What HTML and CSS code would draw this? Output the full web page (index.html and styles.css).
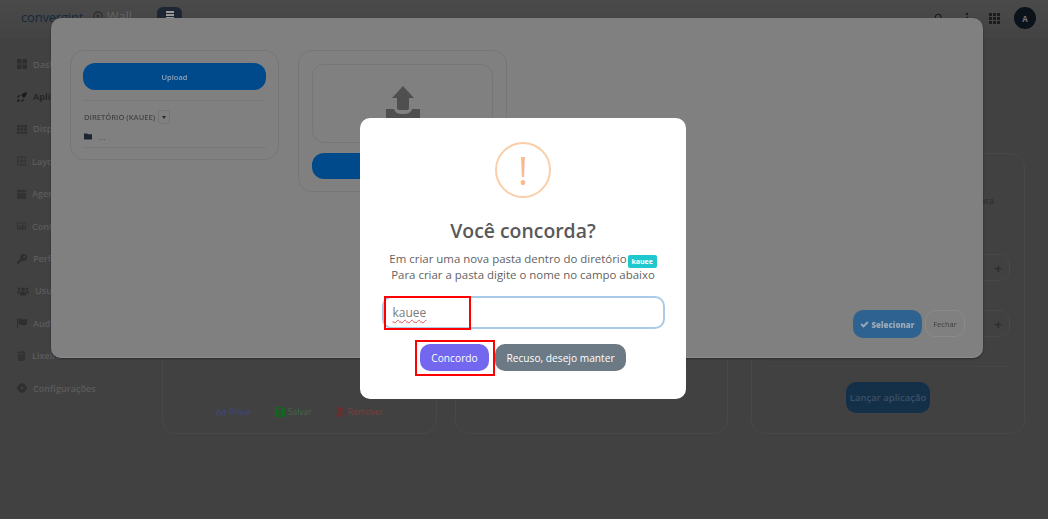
FILE: index.html
```html
<!DOCTYPE html>
<html lang="en">

<head>
  <meta charset="UTF-8" />
  <meta name="viewport" content="width=device-width, initial-scale=1" />
  <title>Convergint Wall</title>
  <link rel="stylesheet" href="styles.css">
</head>

<body>

  <div class="app">
    <header class="topbar">
      <div class="brand">conver<span class="brand-dot">g</span>int</div>
      <div class="wall">
        <svg class="wall-icon" viewBox="0 0 12 12"><circle cx="6" cy="6" r="5" fill="none" stroke="#2c2c2c" stroke-width="1.4"/><path d="M4.6 3.6 8.4 6 4.6 8.4z" fill="#2c2c2c"/></svg>
        <span>Wall</span>
      </div>
      <button class="menu-btn"><span></span><span></span><span></span></button>
      <div class="top-icons">
        <svg class="top-search" viewBox="0 0 12 12"><circle cx="5.5" cy="5.5" r="3.8" fill="none" stroke="#1c1c1c" stroke-width="1.5"/><path d="m8.4 8.4 3 3" stroke="#1c1c1c" stroke-width="1.5"/></svg>
        <svg class="top-dots" viewBox="0 0 4 12"><circle cx="2" cy="2" r="1.2"/><circle cx="2" cy="6" r="1.2"/><circle cx="2" cy="10" r="1.2"/></svg>
        <svg class="top-grid" viewBox="0 0 11 11"><rect width="3" height="3"/><rect x="4" width="3" height="3"/><rect x="8" width="3" height="3"/><rect y="4" width="3" height="3"/><rect x="4" y="4" width="3" height="3"/><rect x="8" y="4" width="3" height="3"/><rect y="8" width="3" height="3"/><rect x="4" y="8" width="3" height="3"/><rect x="8" y="8" width="3" height="3"/></svg>
        <div class="avatar">A</div>
      </div>
    </header>

    <div class="main">
      <nav class="sidebar">
        <a class="nav-item"><svg class="nav-icon" viewBox="0 0 10 10"><path d="M0 0h4.500v4.500H0zM5.500 0H10v4.500H5.500zM0 5.500h4.500V10H0zM5.500 5.500H10V10H5.500z"/></svg>Dashboard</a>
        <a class="nav-item active"><svg class="nav-icon" viewBox="0 0 10 10"><path d="M4 3.200C5.400 1.200 7.400.4 10 0c-.3 2.600-1.200 4.600-3.200 6L4 3.200zM0 4.800l2-1.700 1 .3-1.600 2.300L0 4.800zM5.200 10l1.700-2-.3-1-2.300 1.600L5.200 10zM1.200 7c-.8.5-1 1.800-1.100 2.900C1.200 9.800 2.500 9.600 3 8.800L1.200 7z"/></svg>Aplicações</a>
        <a class="nav-item"><svg class="nav-icon" viewBox="0 0 10 10"><path d="M0 1h2.800v2.400H0zM3.600 1h2.800v2.400H3.600zM7.200 1H10v2.400H7.200zM0 4.200h2.800v2.400H0zM3.600 4.200h2.800v2.400H3.600zM7.200 4.200H10v2.400H7.200zM0 7.400h2.800v2.400H0zM3.600 7.400h2.800v2.400H3.600zM7.200 7.400H10v2.400H7.200z"/></svg>Dispositivos</a>
        <a class="nav-item"><svg class="nav-icon small" viewBox="0 0 9 9"><path fill-rule="evenodd" d="M0 0h9v9H0zm1 1v3h3V1zm4 0v3h3V1zM1 5v3h3V5zm4 0v3h3V5z"/></svg>Layouts</a>
        <a class="nav-item"><svg class="nav-icon small" viewBox="0 0 9 10"><path d="M2 0h1v1h3V0h1v1h2v2H0V1h2zM0 3.800h9V10H0z"/></svg>Agendamentos</a>
        <a class="nav-item"><svg class="nav-icon small" viewBox="0 0 9 9"><path fill-rule="evenodd" d="M0 1h9v7H0zm1 1v4h7V2zm.5 3.500L3 4l1.200 1 1.800-2 1.500 2.500z"/></svg>Conteúdos</a>
        <a class="nav-item"><svg class="nav-icon" viewBox="0 0 10 10"><path fill-rule="evenodd" d="M6.500 0a3.500 3.500 0 1 1-1.300 6.700L4.300 7.600H3v1.300H1.700V10H0V8l3.300-3.300A3.500 3.500 0 0 1 6.500 0zm.8 1.500a1.200 1.200 0 1 0 0 2.400 1.200 1.200 0 0 0 0-2.400z"/></svg>Perfis</a>
        <a class="nav-item"><svg class="nav-icon wide" viewBox="0 0 12 9"><circle cx="6" cy="3" r="1.900"/><circle cx="2" cy="2.400" r="1.300"/><circle cx="10" cy="2.400" r="1.300"/><path d="M2.700 9V7.200C2.700 6 4 5.300 6 5.300S9.300 6 9.300 7.200V9zM0 6.300C0 5 .8 4.400 2 4.400c.5 0 .9.100 1.200.4C2.400 5.300 2 6 2 6.800H0zM12 6.300C12 5 11.200 4.400 10 4.400c-.5 0-.9.100-1.200.4.800.5 1.200 1.200 1.200 2h2z"/></svg>Usuários</a>
        <a class="nav-item"><svg class="nav-icon" viewBox="0 0 10 10"><path d="M0 0h1v10H0zM1.500 1C3.500 0 5 2 7 1.500c1-.2 2-.5 3-.8v5.500c-2 1.300-4 1.300-5.500.6-1-.4-2-.3-3 .2z"/></svg>Auditoria</a>
        <a class="nav-item"><svg class="nav-icon small" viewBox="0 0 9 10"><path d="M3 0h3l.5 1H9v1H0V1h2.500zM.7 2.800h7.600L7.700 10H1.300z"/></svg>Lixeira</a>
        <a class="nav-item"><svg class="nav-icon" viewBox="0 0 10 10"><path fill-rule="evenodd" d="M4 0h2l.3 1.400 1-.5 1.400 1.400-.6 1.100L10 4v2l-1.900.6.600 1.100-1.400 1.400-1-.5L6 10H4l-.3-1.400-1 .5-1.400-1.400.6-1.100L0 6V4l1.900-.6-.6-1.100L2.700.9l1 .5zM5 3.400a1.600 1.600 0 1 0 0 3.200 1.600 1.600 0 0 0 0-3.200z"/></svg>Configurações</a>
      </nav>

      <section class="cards">
        <div class="card card-actions">
          <a class="action action-blue"><svg viewBox="0 0 12 9"><path fill="none" stroke="currentColor" stroke-width="1.200" d="M.7 6.200a2.200 2.200 0 1 0 4.400 0 2.200 2.200 0 0 0-4.400 0zm6.200 0a2.200 2.200 0 1 0 4.400 0 2.200 2.200 0 0 0-4.400 0zM5 6c.6-.4 1.400-.4 2 0M1 5.500 2.500.8h1.300M11 5.500 9.500.8H8.200"/></svg>Privar</a>
          <a class="action action-green"><svg viewBox="0 0 9 9"><path fill-rule="evenodd" d="M0 0h7l2 2v7H0zm1.800 1v2.400h4.400V1zm2.700 3.800a1.500 1.500 0 1 0 0 3 1.500 1.500 0 0 0 0-3z"/></svg>Salvar</a>
          <a class="action action-red"><svg viewBox="0 0 10 10"><path fill-rule="evenodd" d="M5 0c1.600 0 2.800 1 2.800 2.500 0 1-.5 1.700-1.200 2.100v1H3.400v-1C2.700 4.200 2.200 3.500 2.200 2.500 2.200 1 3.400 0 5 0zM3.900 2a.7.7 0 1 0 0 1.400.7.700 0 0 0 0-1.400zm2.200 0a.7.7 0 1 0 0 1.400.7.700 0 0 0 0-1.400zM.6 5.800l4.400 1.700 4.400-1.700.4.900L6.300 8l3.500 1.200-.4.800L5 8.400.6 10l-.4-.8L3.700 8 .2 6.700z"/></svg>Remover</a>
        </div>
        <div class="card card-middle"></div>
        <div class="card card-launch">
          <p class="launch-text">Escolha o conteúdo para</p>
          <div class="field"><span>+</span></div>
          <div class="field"><span>+</span></div>
          <div class="launch-box">
            <button class="launch-btn">Lançar aplicação</button>
          </div>
        </div>
      </section>
    </div>
  </div>

  <!-- Upload modal -->
  <div class="modal">
    <div class="modal-body">
      <div class="panel panel-dir">
        <button class="upload-btn">Upload</button>
        <div class="dir-head">
          <span>DIRETÓRIO (KAUEE)</span>
          <button class="caret-btn"><i></i></button>
        </div>
        <div class="dir-row">
          <svg viewBox="0 0 9 7"><path d="M0 0h3.500l1 1H9v6H0z"/></svg>
          <span>...</span>
        </div>
      </div>
      <div class="panel panel-upload">
        <div class="dropzone">
          <svg class="drop-icon" viewBox="0 0 34 40"><path d="M17 0 28 12H23V22Q23 24 21 24H13Q11 24 11 22V12H6zM0 23H8C9 27 12 28 17 28S25 27 26 23H34V40H0z"/></svg>
        </div>
        <button class="send-btn">Enviar</button>
      </div>
    </div>
    <div class="modal-footer">
      <button class="select-btn">
        <svg viewBox="0 0 10 8"><path d="M.5 4.200 2 2.700l1.800 1.800L8 .4l1.500 1.500L3.800 7.600z"/></svg>
        Selecionar
      </button>
      <button class="close-btn">Fechar</button>
    </div>
  </div>

  <!-- Confirm dialog -->
  <div class="dialog">
    <div class="warn-icon">!</div>
    <h2 class="dialog-title">Você concorda?</h2>
    <div class="dialog-text">
      <span class="text-line">Em criar uma nova pasta dentro do diretório<span class="badge">kauee</span></span>
      <span class="text-line">Para criar a pasta digite o nome no campo abaixo</span>
    </div>
    <div class="dialog-input"><span class="typo">kauee</span></div>
    <div class="dialog-actions">
      <button class="btn-ok">Concordo</button>
      <button class="btn-no">Recuso, desejo manter</button>
    </div>
  </div>

  <!-- Red marks drawn on the screenshot -->
  <div class="mark mark-input"></div>
  <div class="mark mark-ok"></div>

</body>

</html>
```

FILE: styles.css
```css
* {
  box-sizing: border-box;
}

html,
body {
  margin: 0;
  height: 100%;
  overflow: hidden;
}

body {
  background-color: #414141;
  color: #5e5e5e;
  font-family: 'Open Sans', 'Liberation Sans', sans-serif;
}

button {
  font-family: inherit;
  border: none;
  padding: 0;
}

.app {
  height: 519px;
  display: flex;
  flex-direction: column;
}

/* top bar */
.topbar {
  height: 37px;
  flex: none;
  display: flex;
  align-items: flex-start;
  padding: 7px 12px 0 21px;
  background: linear-gradient(#4a4a4a, #434343);
  border-bottom: 1px solid #454545;
}

.brand {
  font-size: 13px;
  line-height: 20px;
  color: #16293a;
  width: 72px;
  letter-spacing: -0.2px;
}

.brand-dot {
  color: #16293a;
}

.wall {
  display: flex;
  align-items: center;
  gap: 4px;
  width: 64px;
  height: 18px;
  font-size: 12.5px;
  color: #666;
}

.wall-icon {
  width: 10px;
  height: 10px;
}

.menu-btn {
  width: 25px;
  height: 20px;
  border-radius: 6px;
  background: #1e2633;
  display: flex;
  flex-direction: column;
  align-items: center;
  gap: 1px;
  padding-top: 4px;
}

.menu-btn span {
  width: 8px;
  height: 2px;
  background: #9a9a9a;
}

.top-icons {
  margin-left: auto;
  display: flex;
  align-items: center;
  height: 22px;
}

.top-icons svg {
  fill: #1c1c1c;
}

.top-search {
  width: 9px;
  height: 9px;
  margin-right: 22px;
  margin-top: -2px;
}

.top-dots {
  width: 4px;
  height: 12px;
  margin-right: 20px;
}

.top-grid {
  width: 11px;
  height: 11px;
  margin-right: 14px;
}

.avatar {
  width: 22px;
  height: 22px;
  border-radius: 50%;
  background: #0b1219;
  color: #6f757a;
  font-size: 8px;
  font-weight: 700;
  display: flex;
  align-items: center;
  justify-content: center;
}

/* sidebar and cards behind the modal */
.main {
  flex: 1;
  display: flex;
}

.sidebar {
  width: 162px;
  flex: none;
  padding: 11px 0 0 17px;
}

.nav-item {
  height: 32.4px;
  display: flex;
  align-items: center;
  gap: 6px;
  font-size: 9.1px;
  font-weight: 600;
  color: #5c5c5c;
  white-space: nowrap;
}

.nav-item.active {
  color: #262626;
  font-weight: 700;
}

.nav-icon {
  width: 10px;
  height: 10px;
  fill: #2e2e2e;
  flex: none;
}

.nav-item.active .nav-icon {
  fill: #1c1c1c;
}

.nav-icon.small {
  width: 9px;
  fill: #333;
}

.nav-icon.wide {
  width: 12px;
}

.cards {
  flex: 1;
  display: grid;
  grid-template-columns: 275px 278px 274px;
  column-gap: 18px;
  padding: 116px 23px 85px 0;
}

.card {
  border: 1px solid #484848;
  border-radius: 14px;
}

.card-middle {
  margin-right: 5px;
}

.card-actions {
  display: flex;
  justify-content: center;
  align-items: flex-end;
  gap: 23px;
  padding-bottom: 16px;
}

.action {
  display: flex;
  align-items: center;
  gap: 3px;
  font-size: 8.5px;
}

.action svg {
  width: 10px;
  height: 10px;
  fill: currentColor;
}

.action-blue {
  color: #41467f;
}

.action-green {
  color: #416846;
}

.action-green svg {
  fill: #12661f;
}

.action-red {
  color: #7d3c3c;
}

.action-red svg {
  fill: #7a2828;
}

.card-launch {
  padding: 0 14px;
  display: flex;
  flex-direction: column;
}

.launch-text {
  margin: 41px 0 47px;
  font-size: 9px;
  line-height: 12px;
  color: #2a2a2a;
  text-align: right;
  padding-right: 16px;
}

.field {
  height: 27px;
  border: 1px solid #484848;
  border-radius: 10px;
  margin-bottom: 29px;
  display: flex;
  align-items: center;
  justify-content: flex-end;
  padding-right: 7px;
  font-size: 13px;
  font-weight: 700;
  color: #2c2c2c;
}

.launch-box {
  border-top: 1px solid #464646;
  margin: 0 2px;
  padding-top: 15px;
  display: flex;
  justify-content: center;
}

.launch-btn {
  width: 84px;
  height: 31px;
  border-radius: 10px;
  background: #143049;
  color: #3c5066;
  font-size: 9.5px;
  font-weight: 600;
}

/* upload modal */
.modal {
  position: fixed;
  left: 51px;
  top: 18px;
  width: 932px;
  height: 340px;
  background: #808080;
  border-radius: 10px;
  box-shadow: 0 1px 2px #2a2a2a;
  border-bottom: 1px solid #8c8c8c;
  padding: 32px 18px 19px 19px;
  display: flex;
  flex-direction: column;
  justify-content: space-between;
}

.modal-body {
  display: flex;
  align-items: flex-start;
  gap: 19px;
}

.panel {
  width: 209px;
  border: 1px solid #767676;
  border-radius: 14px;
  padding: 12px;
}

.panel-dir {
  height: 110px;
}

.upload-btn {
  display: block;
  width: 100%;
  height: 27px;
  border-radius: 12px;
  background: #004a8c;
  color: #8fa3b8;
  font-size: 7.5px;
  font-weight: 600;
}

.dir-head {
  margin: 10px 0 0 1px;
  padding-top: 9px;
  border-top: 1px dotted #747474;
  display: flex;
  align-items: center;
  gap: 3px;
  font-size: 7.6px;
  font-weight: 600;
  color: #444;
}

.caret-btn {
  width: 12px;
  height: 14px;
  border: 1px solid #767676;
  border-radius: 3px;
  background: none;
  display: flex;
  align-items: center;
  justify-content: center;
}

.caret-btn i {
  border: 2.5px solid transparent;
  border-top: 3px solid #2a2a2a;
  border-bottom: 0;
}

.dir-row {
  margin: 7px 0 0 1px;
  padding-bottom: 5px;
  border-bottom: 1px solid #767676;
  display: flex;
  align-items: center;
  gap: 7px;
  font-size: 8px;
  color: #444;
}

.dir-row svg {
  width: 8px;
  height: 7px;
  fill: #1e2530;
}

.panel-upload {
  height: 142px;
  padding: 13px;
}

.dropzone {
  height: 79px;
  border: 1px solid #767676;
  border-radius: 12px;
  display: flex;
  justify-content: center;
  padding-top: 21px;
  overflow: hidden;
}

.drop-icon {
  width: 34px;
  height: 40px;
  fill: #4f4f4f;
  flex: none;
}

.send-btn {
  display: block;
  width: 100%;
  height: 26px;
  margin-top: 10px;
  border-radius: 12px;
  background: #004a8c;
  color: #8fa3b8;
  font-size: 7.5px;
}

.modal-footer {
  display: flex;
  justify-content: flex-end;
  align-items: flex-start;
  gap: 3px;
}

.select-btn {
  width: 69px;
  height: 28px;
  border-radius: 10px;
  background: #2e6391;
  color: #9aa8b6;
  font-size: 8px;
  font-weight: 800;
  display: flex;
  align-items: center;
  justify-content: center;
  gap: 2px;
}

.select-btn svg {
  width: 9px;
  height: 7px;
  fill: #9aa8b6;
}

.close-btn {
  width: 40px;
  height: 27px;
  border: 1px solid #8a8a8a;
  border-radius: 10px;
  background: none;
  color: #3e3e3e;
  font-size: 7.5px;
}

/* confirm dialog */
.dialog {
  position: fixed;
  left: 360px;
  top: 118px;
  width: 326px;
  height: 281px;
  background: #fff;
  border-radius: 10px;
  padding-top: 24px;
  display: flex;
  flex-direction: column;
  align-items: center;
}

.warn-icon {
  width: 56px;
  height: 56px;
  border: 2px solid #facea8;
  border-radius: 50%;
  color: #f8bb86;
  font-size: 38px;
  line-height: 52px;
  text-align: center;
  flex: none;
}

.dialog-title {
  margin: 19px 0 0;
  font-size: 19.4px;
  line-height: 28px;
  font-weight: 600;
  color: #595959;
}

.dialog-text {
  margin-top: 6px;
  font-size: 11.45px;
  color: #626262;
  text-align: center;
}

.text-line {
  display: block;
  height: 16px;
  line-height: 16px;
  white-space: nowrap;
}

.badge {
  display: inline-block;
  vertical-align: -1px;
  width: 29px;
  height: 13px;
  line-height: 13px;
  margin-left: 1px;
  border-radius: 2px;
  background: #1fc8cf;
  color: #fff;
  font-size: 7px;
  font-weight: 700;
}

.dialog-input {
  width: 283px;
  height: 33px;
  margin-top: 13px;
  border: 2px solid #a9cbe8;
  border-radius: 10px;
  padding-left: 9px;
  font-size: 12px;
  line-height: 29px;
  color: #7d7d7d;
}

.typo {
  text-decoration: underline wavy #e25555 1px;
  text-underline-offset: 2px;
}

.dialog-actions {
  margin-top: 15px;
  display: flex;
  gap: 6px;
}

.btn-ok,
.btn-no {
  height: 27px;
  border-radius: 10px;
  color: #fff;
  font-size: 10.2px;
  font-weight: 500;
}

.btn-ok {
  width: 69px;
  background: #7367f0;
}

.btn-no {
  width: 131px;
  background: #6c7a86;
}

/* annotation boxes */
.mark {
  position: fixed;
  border: 2px solid #f00;
}

.mark-input {
  left: 384px;
  top: 296px;
  width: 87px;
  height: 34px;
}

.mark-ok {
  left: 415px;
  top: 340px;
  width: 80px;
  height: 36px;
}
```
